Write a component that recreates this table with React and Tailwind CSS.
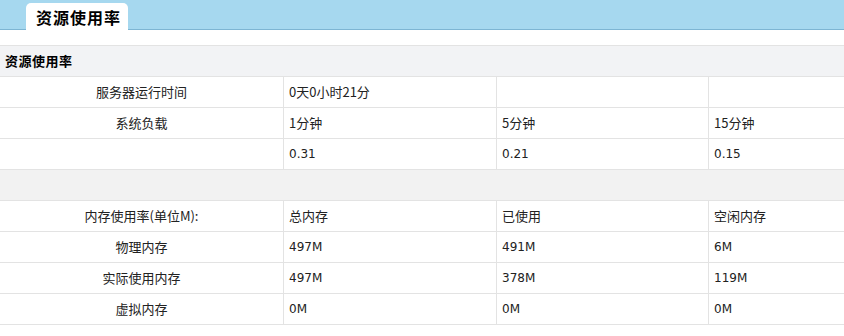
const cjk = "font-['Noto_Sans_CJK_SC','Noto_Sans',sans-serif] text-[13px]";
const num = "font-['DejaVu_Sans','Noto_Sans_CJK_SC',sans-serif] text-[12px]";

const rows = [
  { label: "服务器运行时间", cells: [["0天0小时21分", cjk], ["", num], ["", num]] },
  { label: "系统负载", cells: [["1分钟", cjk], ["5分钟", cjk], ["15分钟", cjk]] },
  { label: "", cells: [["0.31", num], ["0.21", num], ["0.15", num]] },
  { blank: true },
  { label: "内存使用率(单位M):", cells: [["总内存", cjk], ["已使用", cjk], ["空闲内存", cjk]] },
  { label: "物理内存", cells: [["497M", num], ["491M", num], ["6M", num]] },
  { label: "实际使用内存", cells: [["497M", num], ["378M", num], ["119M", num]] },
  { label: "虚拟内存", cells: [["0M", num], ["0M", num], ["0M", num]] },
];

function Row({ row }) {
  if (row.blank) {
    return <div className="h-[31px] border-b border-[#e3e3e3] bg-[#f2f2f2]" />;
  }
  return (
    <div className="grid h-[31px] grid-cols-[284px_213px_212px_1fr] border-b border-[#e3e3e3] text-[#222]">
      <div className={`flex items-center justify-center border-r border-[#e3e3e3] ${cjk}`}>{row.label}</div>
      {row.cells.map(([text, font], i) => (
        <div
          key={i}
          className={`flex items-center pl-[5px] ${i < 2 ? "border-r border-[#e3e3e3]" : ""} ${font}`}
        >
          {text}
        </div>
      ))}
    </div>
  );
}

export default function App() {
  return (
    <div className="h-[336px] w-[844px] overflow-hidden bg-white">
      <div className="flex h-[30px] items-end border-b border-[#7db5d3] bg-[#a6d8ef] pl-[26px]">
        <div className="relative -mb-px flex h-[27px] w-[102px] items-center rounded-t-[5px] bg-white pl-[10px] font-['Noto_Sans_CJK_SC',sans-serif] text-[16px] font-bold tracking-[1px] text-black">
          资源使用率
        </div>
      </div>
      <div className="mt-[15px] flex h-[32px] items-center border-y border-[#e3e3e3] bg-[#f2f3f5] pl-[5px] font-['Noto_Sans_CJK_SC',sans-serif] text-[13px] font-bold tracking-[0.5px] text-black">
        资源使用率
      </div>
      {rows.map((row, i) => (
        <Row key={i} row={row} />
      ))}
    </div>
  );
}
